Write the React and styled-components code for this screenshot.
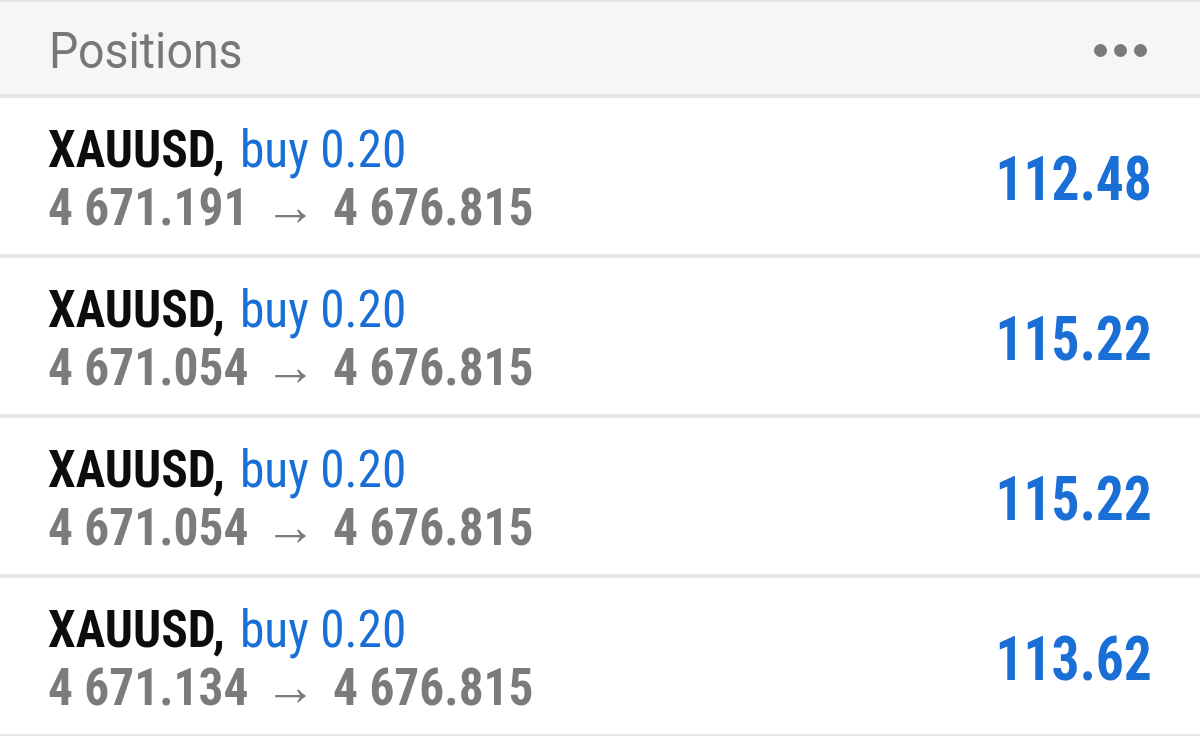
import React from "react";
import styled, { createGlobalStyle } from "styled-components";

const Global = createGlobalStyle`
  html, body { margin: 0; padding: 0; background: #ffffff; }
  body { font-family: "Roboto Condensed", Roboto, "Liberation Sans", sans-serif; }
`;

const Page = styled.div`
  width: 1200px;
  height: 736px;
  overflow: hidden;
  background: #ffffff;
  display: flex;
  flex-direction: column;
`;

const Header = styled.header`
  height: 92px;
  flex: none;
  box-sizing: content-box;
  border-top: 2px solid #e4e4e4;
  border-bottom: 4px solid #e6e6e6;
  background: #f6f6f6;
  display: flex;
  align-items: center;
  justify-content: space-between;
  padding: 0 48px 0 49px;
`;

const Title = styled.h1`
  margin: 0;
  padding-top: 5px;
  font-family: Roboto, "Liberation Sans", sans-serif;
  font-weight: 400;
  font-size: 50px;
  color: #777777;
  line-height: 1;
  transform: scaleX(0.93);
  transform-origin: left center;
`;

const Dots = styled.div`
  display: flex;
  gap: 7px;
  margin-right: 5px;
  padding-top: 4px;
`;

const Dot = styled.span`
  width: 13px;
  height: 13px;
  border-radius: 50%;
  background: #7a7a7a;
`;

const Row = styled.div`
  height: 156px;
  flex: none;
  box-sizing: content-box;
  border-bottom: 4px solid #e8e8e8;
  display: flex;
  align-items: center;
  justify-content: space-between;
  padding: 0 48px;
`;

const Info = styled.div`
  display: flex;
  flex-direction: column;
  padding-top: 4px;
  transform: scaleX(0.95);
  transform-origin: left center;
`;

const Line = styled.div`
  font-size: 52px;
  line-height: 57px;
  white-space: nowrap;
`;

const Symbol = styled.span`
  font-weight: 700;
  color: #0c0c0c;
  margin-right: 4px;
`;

const Side = styled.span`
  font-weight: 400;
  color: #1a6fd6;
`;

const Prices = styled(Line)`
  font-weight: 700;
  color: #7b7b7b;
`;

const Arrow = styled.span`
  font-family: Roboto, sans-serif;
  font-weight: 400;
  font-size: 54px;
  margin: 0 18px 0 17px;
`;

const Profit = styled.div`
  font-size: 61px;
  font-weight: 700;
  color: #1a6fd6;
  line-height: 1;
  padding-top: 6px;
  transform: scaleX(0.91);
  transform-origin: right center;
`;

const positions = [
  { open: "4 671.191", current: "4 676.815", profit: "112.48" },
  { open: "4 671.054", current: "4 676.815", profit: "115.22" },
  { open: "4 671.054", current: "4 676.815", profit: "115.22" },
  { open: "4 671.134", current: "4 676.815", profit: "113.62" },
];

export default function App() {
  return (
    <Page>
      <Global />
      <Header>
        <Title>Positions</Title>
        <Dots>
          <Dot />
          <Dot />
          <Dot />
        </Dots>
      </Header>
      {positions.map((p, i) => (
        <Row key={i}>
          <Info>
            <Line>
              <Symbol>XAUUSD,</Symbol> <Side>buy 0.20</Side>
            </Line>
            <Prices>
              {p.open}
              <Arrow>→</Arrow>
              {p.current}
            </Prices>
          </Info>
          <Profit>{p.profit}</Profit>
        </Row>
      ))}
    </Page>
  );
}
